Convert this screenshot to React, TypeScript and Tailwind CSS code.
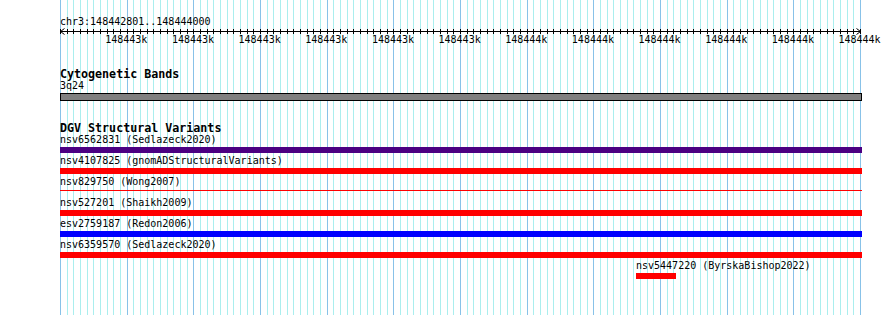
import React from "react";

const minorLines = Array.from({ length: 121 }, (_, i) => Math.round(60 + (i * 800) / 120));

const tickLabels = [
  "148443k",
  "148443k",
  "148443k",
  "148443k",
  "148443k",
  "148443k",
  "148444k",
  "148444k",
  "148444k",
  "148444k",
  "148444k",
  "148444k",
];

type Variant = { label: string; color: string; thin?: boolean };

const variants: Variant[] = [
  { label: "nsv6562831 (Sedlazeck2020)", color: "bg-[#4b0082]" },
  { label: "nsv4107825 (gnomADStructuralVariants)", color: "bg-[#ff0000]" },
  { label: "nsv829750 (Wong2007)", color: "bg-[#ff0000]", thin: true },
  { label: "nsv527201 (Shaikh2009)", color: "bg-[#ff0000]" },
  { label: "esv2759187 (Redon2006)", color: "bg-[#0000ff]" },
  { label: "nsv6359570 (Sedlazeck2020)", color: "bg-[#ff0000]" },
];

const Grid = () => (
  <svg className="absolute inset-0" width={890} height={315}>
    {minorLines.map((x, i) => (
      <line
        key={i}
        x1={x + 0.5}
        x2={x + 0.5}
        y1={0}
        y2={315}
        stroke={i % 10 === 0 ? "#88c2e8" : "#aaeeee"}
        strokeWidth={1}
      />
    ))}
  </svg>
);

const Axis = () => (
  <svg width={890} height={7} className="block">
    <line x1={60} x2={861} y1={3.5} y2={3.5} stroke="#000" strokeWidth={1} />
    {minorLines.map((x, i) => (
      <line key={i} x1={x + 0.5} x2={x + 0.5} y1={1} y2={6} stroke="#000" strokeWidth={1} />
    ))}
    <polyline points="64.5,0.5 60.5,3.5 64.5,6.5" fill="none" stroke="#000" strokeWidth={1} />
    <polyline points="856.5,0.5 860.5,3.5 856.5,6.5" fill="none" stroke="#000" strokeWidth={1} />
  </svg>
);

const App = () => {
  return (
    <div className="relative w-[890px] h-[315px] overflow-hidden bg-white text-black font-['DejaVu_Sans_Mono','Liberation_Mono',monospace]">
      <Grid />
      <div className="relative pt-[17px]">
        <div className="pl-[60px] h-[11px] leading-[10px] text-[10px] whitespace-nowrap">
          chr3:148442801..148444000
        </div>
        <Axis />
        <div className="flex ml-[93px] h-[12px] leading-[10px] text-[10px]">
          {tickLabels.map((t, i) => (
            <div key={i} className="w-[66.667px] shrink-0 text-center whitespace-nowrap">
              {t}
            </div>
          ))}
        </div>

        <div className="pl-[60px] mt-[22px]">
          <div className="h-[12px] leading-[10px] text-[11.67px] font-bold whitespace-nowrap">
            Cytogenetic Bands
          </div>
          <div className="h-[12px] leading-[10px] text-[10px]">3q24</div>
          <div className="w-[802px] h-[8px] border border-black bg-[#808080]" />

          <div className="mt-[22px] h-[12px] leading-[10px] text-[11.67px] font-bold whitespace-nowrap">
            DGV Structural Variants
          </div>

          <div className="flex flex-col gap-[3px]">
            {variants.map((v) => (
              <div key={v.label}>
                <div className="h-[12px] leading-[10px] text-[10px] whitespace-nowrap">{v.label}</div>
                {v.thin ? (
                  <div className="h-[6px] pt-[1px]">
                    <div className={`w-[802px] h-[1px] ${v.color}`} />
                  </div>
                ) : (
                  <div className={`w-[802px] h-[6px] ${v.color}`} />
                )}
              </div>
            ))}
            <div className="ml-[576px]">
              <div className="h-[12px] leading-[10px] text-[10px] whitespace-nowrap">
                nsv5447220 (ByrskaBishop2022)
              </div>
              <div className="w-[40px] h-[6px] bg-[#ff0000]" />
            </div>
          </div>
        </div>
      </div>
    </div>
  );
};

export default App;
